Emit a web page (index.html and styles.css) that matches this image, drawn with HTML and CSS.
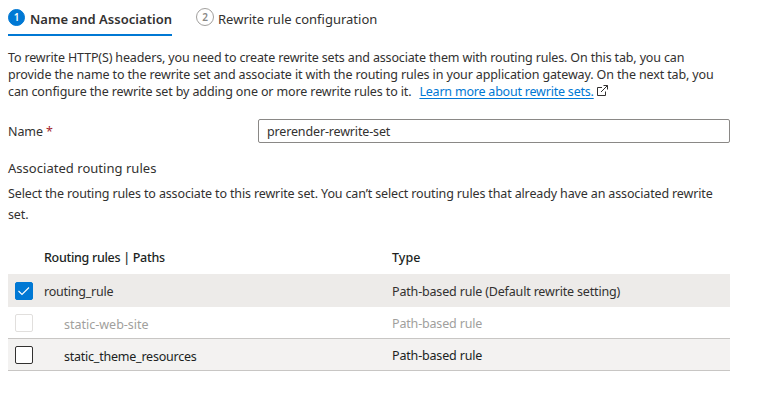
FILE: index.html
```html
<!DOCTYPE html>
<html lang="en">
<head>
<meta charset="utf-8">
<title>Rewrite set</title>
<link rel="stylesheet" href="styles.css">
</head>
<body>
<main class="page">
  <nav class="tabs">
    <a class="tab active"><span class="step">1</span><span class="t1">Name and Association</span></a>
    <a class="tab"><span class="step">2</span><span class="t2">Rewrite rule configuration</span></a>
  </nav>
  <p class="intro"><span class="l1">To rewrite HTTP(S) headers, you need to create rewrite sets and associate them with routing rules. On this tab, you can</span><br><span class="l2">provide the name to the rewrite set and associate it with the routing rules in your application gateway. On the next tab, you</span><br><span class="l3">can configure the rewrite set by adding one or more rewrite rules to it.</span><a class="link">Learn more about rewrite sets.</a><svg class="ext" viewBox="0 0 11 11" width="11" height="11"><path d="M5 2.5H.5V10.5H8.5V6.5M6.5 .5H10.5V4.5M10.5 .5L4 7"/></svg></p>
  <div class="field"><label>Name <span class="req">*</span></label><div class="input">prerender-rewrite-set</div></div>
  <h2 class="heading">Associated routing rules</h2>
  <p class="hint">Select the routing rules to associate to this rewrite set. You can’t select routing rules that already have an associated rewrite<br>set.</p>
  <div class="table">
    <div class="row head"><span class="name">Routing rules | Paths</span><span>Type</span></div>
    <div class="row selected"><span class="box checked"><svg viewBox="0 0 18 18" width="18" height="18"><path d="M3.5 9L7 12.5L14 5.5"/></svg></span><span class="name">routing_rule</span><span class="kind">Path-based rule (Default rewrite setting)</span></div>
    <div class="row disabled"><span class="box"></span><span class="name child dash">static-web-site</span><span class="kind">Path-based rule</span></div>
    <div class="row alt"><span class="box"></span><span class="name child">static_theme_resources</span><span class="kind">Path-based rule</span></div>
  </div>
</main>
</body>
</html>
```
FILE: styles.css
```css
* { box-sizing: border-box; }
body { margin: 0; background: #fff; color: #323130; font: 12.5px/17px "Noto Sans", "Open Sans", sans-serif; }
p, h2 { margin: 0; font-size: inherit; font-weight: 400; white-space: nowrap; }
.page { padding: 0 8px; width: 738px; }
.tabs { display: flex; gap: 24px; height: 36px; }
.tab { display: flex; height: 36px; padding-top: 8px; font-size: 13px; line-height: 23px; white-space: nowrap; }
.tab.active { width: 164px; border-bottom: 2px solid #0078d4; font-weight: 600; }
.t1 { letter-spacing: .03px; }
.step { flex: none; width: 18px; height: 18px; margin-right: 4px; border: 1px solid #a19f9d; border-radius: 50%; font-size: 10px; line-height: 16px; font-weight: 600; text-align: center; color: #8a8886; }
.active .step { width: 17px; height: 17px; margin: 1px 5px 0 0; border-color: #0078d4; background: #0078d4; color: #fff; line-height: 15px; }
.intro { margin-top: 13px; }
.l1 { letter-spacing: -.15px; }
.l2 { letter-spacing: -.13px; }
.l3 { letter-spacing: -.125px; }
.link { margin-left: 8px; color: #0078d4; letter-spacing: -.21px; text-decoration: underline; text-underline-offset: 2px; }
.ext { width: 11px; height: 11px; margin-left: 3px; fill: none; stroke: #323130; stroke-width: 1; }
.field { display: flex; align-items: center; height: 24px; margin-top: 19px; }
.field label { width: 250px; letter-spacing: -.1px; }
.req { color: #a4262c; }
.input { width: 472px; height: 24px; padding: 3px 8px; border: 1px solid #8a8886; border-radius: 2px; letter-spacing: -.15px; }
.heading { margin-top: 17px; font-size: 13px; letter-spacing: .03px; }
.hint { margin-top: 6px; line-height: 21px; letter-spacing: -.14px; }
.table { width: 722px; margin-top: 16px; }
.row { display: grid; grid-template-columns: 36px 348px 1fr; align-items: center; height: 32px; white-space: nowrap; }
.head { height: 33px; font-weight: 500; color: #201f1e; padding-bottom: 1px; }
.name { grid-column: 2; letter-spacing: -.23px; }
.head .name { letter-spacing: -.3px; }
.row:not(.head) .name, .selected .kind { padding-top: 2px; }
.child { padding-left: 20px; }
.alt .name, .disabled .name { padding-top: 3px !important; }
.dash { letter-spacing: 0; }
.kind { padding-top: 1px; letter-spacing: -.17px; }
.box { width: 18px; height: 18px; margin: 1px 0 0 7px; border: 1px solid #323130; border-radius: 2px; background: #fff; }
.box svg { display: block; margin: -1px; fill: none; stroke: #fff; stroke-width: 1.1; }
.checked { background: #0078d4; border-color: #0078d4; }
.selected { height: 33px; background: #edebe9; }
.disabled { color: #a19f9d; border-bottom: 1px solid #c8c6c4; }
.disabled .box { border-color: #e1dfdd; }
.alt { background: #f3f2f1; border-bottom: 1px solid #c8c6c4; }
.alt .name, .alt .kind { color: #201f1e; }
```
